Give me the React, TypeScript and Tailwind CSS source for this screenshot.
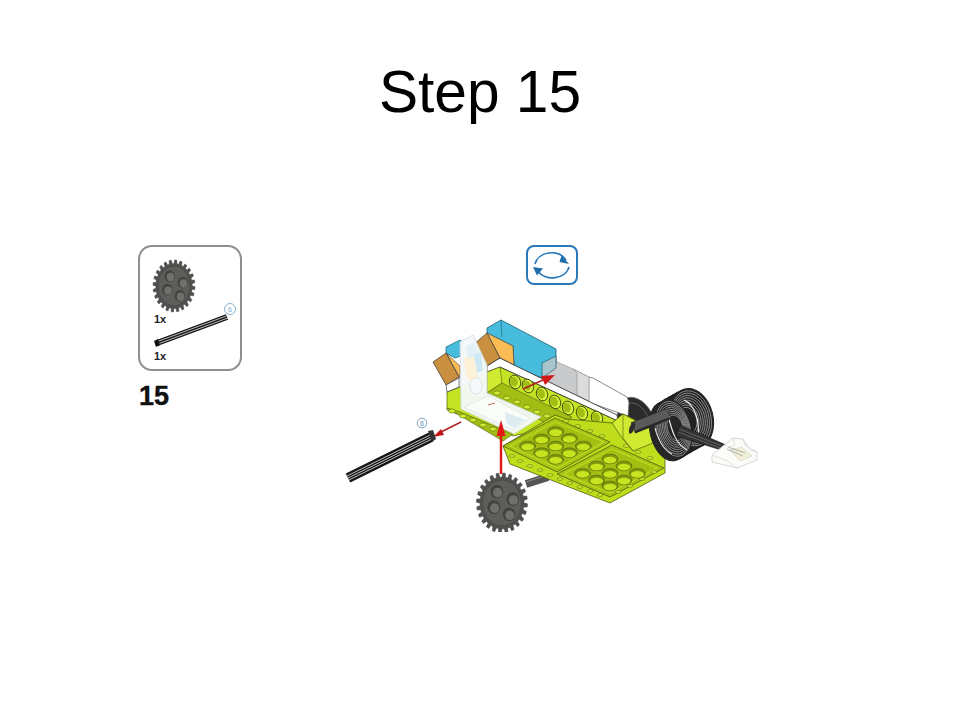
const FONT = "font-['Liberation_Sans',Arial,sans-serif]";

function gearPath(cx: number, cy: number, rx: number, ry: number, teeth: number) {
  const pts: string[] = [];
  const step = (Math.PI * 2) / teeth;
  for (let i = 0; i < teeth; i++) {
    const a = i * step + 0.08;
    const seq: [number, number][] = [
      [-0.5, 0.86],
      [-0.3, 0.87],
      [-0.2, 1],
      [0.2, 1],
      [0.3, 0.87],
    ];
    for (const [o, r] of seq) {
      const t = a + o * step;
      pts.push(`${(cx + Math.cos(t) * rx * r).toFixed(1)},${(cy + Math.sin(t) * ry * r).toFixed(1)}`);
    }
  }
  return `M${pts.join("L")}Z`;
}

function Gear({ cx, cy, rx, ry, teeth = 24 }: { cx: number; cy: number; rx: number; ry: number; teeth?: number }) {
  const holes: [number, number][] = [
    [-0.2, -0.38],
    [0.42, -0.13],
    [0.28, 0.38],
    [-0.32, 0.14],
  ];
  return (
    <g>
      <path d={gearPath(cx, cy, rx, ry, teeth)} fill="#50514e" stroke="#3f403d" strokeWidth="0.5" />
      <ellipse cx={cx} cy={cy} rx={rx * 0.76} ry={ry * 0.76} fill="#5d5e5b" stroke="#474845" strokeWidth="0.7" />
      {holes.map(([x, y], i) => (
        <g key={i}>
          <ellipse cx={cx + x * rx} cy={cy + y * ry} rx={rx * 0.25} ry={ry * 0.23} fill="#42433f" />
          <ellipse cx={cx + x * rx + 0.7} cy={cy + y * ry + 0.9} rx={rx * 0.18} ry={ry * 0.16} fill="#6f706c" />
        </g>
      ))}
    </g>
  );
}

function Axle({ x1, y1, x2, y2, w = 8, lines = [0] }: { x1: number; y1: number; x2: number; y2: number; w?: number; lines?: number[] }) {
  const dx = x2 - x1;
  const dy = y2 - y1;
  const len = Math.hypot(dx, dy);
  const nx = -dy / len;
  const ny = dx / len;
  return (
    <g>
      <line x1={x1} y1={y1} x2={x2} y2={y2} stroke="#161616" strokeWidth={w} />
      {lines.map((o, i) => (
        <line
          key={i}
          x1={x1 + nx * o}
          y1={y1 + ny * o}
          x2={x2 + nx * o}
          y2={y2 + ny * o}
          stroke="#d4d4d4"
          strokeWidth="0.9"
        />
      ))}
    </g>
  );
}

const plate1: [number, number][] = [
  [197, 275], [155, 297], [238, 295], [113, 318], [197, 318], [280, 318], [155, 338], [238, 338], [197, 358],
];
const plate2: [number, number][] = [
  [360, 357], [320, 378], [402, 378], [278, 400], [360, 400], [442, 400], [320, 420], [402, 420], [360, 438],
];
const beamHoles: [number, number][] = [
  [515, 382], [528, 386], [542, 394], [555, 402], [568, 408], [582, 413], [597, 418],
];
const studs: [number, number][] = [
  [497, 393], [507, 398], [517, 402], [527, 407], [537, 412], [547, 416],
];
const frontStuds: [number, number][] = [
  [452, 411], [463, 416], [473, 420], [483, 425], [493, 429], [503, 434],
];
const edgeStuds: [number, number][] = [
  [512, 456], [520, 461], [530, 466], [540, 470], [550, 475], [560, 479], [570, 483], [580, 487], [590, 491], [600, 495],
  [618, 492], [630, 486], [642, 479], [654, 472],
  [566, 421], [578, 426], [590, 431], [602, 436],
  [626, 446], [638, 452], [650, 458],
];
const rings = [0.93, 0.86, 0.79, 0.72, 0.65, 0.58, 0.51, 0.44];

function Diagram() {
  return (
    <svg viewBox="340 240 440 300" className="w-[440px] h-[300px] shrink-0">
      {/* rotate icon */}
      <rect x="527" y="246" width="50" height="38" rx="7" fill="#fff" stroke="#2a78b8" strokeWidth="2" />
      <path d="M535 264 C538 252 558 248 566 260" fill="none" stroke="#2a78b8" strokeWidth="1.6" />
      <path d="M561.500 255.500 L569 264 L559.500 262 Z" fill="#1f6ca8" />
      <path d="M569 267 C566 279 545 282 538 271" fill="none" stroke="#2a78b8" strokeWidth="1.6" />
      <path d="M533 267 L543 268.500 L537 275.500 Z" fill="#1f6ca8" />

      {/* coil behind plate */}
      <ellipse cx="637" cy="424" rx="18" ry="28" fill="#2b2b2b" stroke="#777" strokeWidth="0.6" transform="rotate(-22 637 424)" />
      <ellipse cx="637" cy="424" rx="13" ry="22" fill="none" stroke="#777" strokeWidth="0.6" transform="rotate(-22 637 424)" />

      {/* motor */}
      <path d="M588 377 L593 378 L627 397 L629 402 L628 416 L588 402 Z" fill="#fff" stroke="#6f6f6f" strokeWidth="0.8" />
      <path d="M543 365 L555 361 L573 369 L589 377 L589 402 L543 380 Z" fill="#c9cacb" stroke="#8d8d8d" strokeWidth="0.6" />
      <path d="M573 369 L577 373 L577 395 L589 402 L589 377 Z" fill="#dadbdc" stroke="#8d8d8d" strokeWidth="0.6" />

      {/* top blue brick */}
      <path d="M487 328 L501 320 L556 349 L556 363 L542 378 L514 367 L513 346 L487 333 Z" fill="#47bcdc" stroke="#17606f" strokeWidth="0.8" />
      <path d="M501 320 L502 337 M513 346 L514 367" stroke="#17606f" strokeWidth="0.6" />
      <path d="M542 363 L556 356 L556 368 L542 378 Z" fill="#a8c4cc" stroke="#17606f" strokeWidth="0.7" />
      <path d="M446 347 L460 340 L463 342 L461 356 L455 358 L446 353 Z" fill="#47bcdc" stroke="#17606f" strokeWidth="0.7" />

      {/* orange parts */}
      <path d="M487 333 L513 346 L514 365 L500 358 Z" fill="#fbbb55" stroke="#444" strokeWidth="0.6" />
      <path d="M473 345 L487 333 L500 358 L487 366 Z" fill="#c9913f" stroke="#333" strokeWidth="0.7" />
      <path d="M446 353 L460 366 L460 378 Z" fill="#fbbb55" stroke="#444" strokeWidth="0.6" />
      <path d="M433 362 L446 353 L459 377 L446 385 Z" fill="#c9913f" stroke="#333" strokeWidth="0.7" />

      {/* lime left and beam */}
      <path d="M447 392 L460 387 L487 372 L500 367 L618 421 L600 440 L540 430 L513 436 L447 410 Z" fill="#c4e423" stroke="#4f5e10" strokeWidth="0.7" />
      <path d="M446 385 L459 378 L459 387 L447 392 Z" fill="#fff" stroke="#222" strokeWidth="0.6" />
      <path d="M487 366 L500 358 L514 365 L617 415 L618 421 L500 367 L487 372 Z" fill="#fff" stroke="#222" strokeWidth="0.8" />
      <path d="M487 372 L500 367 L502 383 L487 393 Z" fill="#cfea30" stroke="#4f5e10" strokeWidth="0.6" />
      <path d="M487 393 L502 383 L572 417 L556 428 Z" fill="#a2bd14" stroke="#4f5e10" strokeWidth="0.6" />
      <path d="M447 408 L460 412 L513 434 L503 441 Z" fill="#a2bd14" stroke="#4f5e10" strokeWidth="0.6" />
      {beamHoles.map(([x, y], i) => (
        <g key={i}>
          <ellipse cx={x} cy={y} rx="5.500" ry="7" fill="#d6f03c" stroke="#3f4a0c" strokeWidth="0.9" transform={`rotate(-20 ${x} ${y})`} />
          <ellipse cx={x - 0.8} cy={y - 0.8} rx="3.800" ry="5" fill="#a2bd14" transform={`rotate(-20 ${x} ${y})`} />
        </g>
      ))}
      {studs.concat(frontStuds).map(([x, y], i) => (
        <ellipse key={i} cx={x} cy={y} rx="3.500" ry="2" fill="#cfea30" stroke="#4f5e10" strokeWidth="0.5" />
      ))}

      {/* transparent bracket */}
      <path d="M460 342 L473 335 L487 365 L487 393 L541 417 L514 434 L461 409 Z" fill="#f4f8f9" fillOpacity="0.96" stroke="#cdd9dc" strokeWidth="0.8" />
      <path d="M464 358 L476 354 L478 385 L466 378 Z" fill="#fdf1d8" />
      <path d="M466 346 L474 343 L478 355 L468 359 Z" fill="#e1f1f6" />
      <path d="M474 355 L481 352 L483 371 L477 373 Z" fill="#cbe8f3" />
      <path d="M464 407 L488 396 L530 418 L513 430 Z" fill="#fafcf8" stroke="#d5dfe0" strokeWidth="0.6" />
      <path d="M505 412 L526 420 L514 428 L507 424 Z" fill="#dcecf1" />
      <ellipse cx="476" cy="386" rx="6" ry="8" fill="#f7fafb" stroke="#d2dadd" strokeWidth="0.7" />
      <path d="M488 405 L495 403" stroke="#b04848" strokeWidth="0.8" />

      {/* back axle under plate */}
      <line x1="526" y1="484" x2="548" y2="477" stroke="#555653" strokeWidth="8" />
      <line x1="526" y1="482" x2="548" y2="475" stroke="#8a8b88" strokeWidth="1" />

      {/* big plate */}
      <path d="M503 446 L555 415 L566 419 L612 423 L623 414 L650 428 L653 443 L665 455 L665 473 L610 503 L510 464 Z" fill="#c0dd1c" stroke="#4f5e10" strokeWidth="0.8" />
      <path d="M612 423 L623 414 L650 428 L653 443 L633 451 L622 438 Z" fill="#cfea30" stroke="#4f5e10" strokeWidth="0.7" />
      <path d="M623 414 L623 438 L633 451" fill="none" stroke="#4f5e10" strokeWidth="0.6" />
      <path d="M503 446 L555 418 L610 442 L557 472 Z" fill="#a8c416" stroke="#4f5e10" strokeWidth="0.8" />
      <path d="M557 474 L612 445 L664 468 L610 497 Z" fill="#a8c416" stroke="#4f5e10" strokeWidth="0.8" />
      <path d="M510 446 L555 422 L604 442 L557 468 Z" fill="#a4bf12" stroke="#c4e023" strokeWidth="1" />
      <path d="M564 474 L612 449 L657 468 L610 493 Z" fill="#a4bf12" stroke="#c4e023" strokeWidth="1" />
      {edgeStuds.map(([x, y], i) => (
        <ellipse key={i} cx={x} cy={y} rx="3" ry="1.400" fill="#cfea30" stroke="#4f5e10" strokeWidth="0.5" />
      ))}
      {plate1.concat(plate2).map(([zx, zy], i) => {
        const x = 490 + zx / 3;
        const y = 340 + zy / 3;
        return (
          <g key={i}>
            <ellipse cx={x} cy={y} rx="8" ry="4.800" fill="#7f980e" stroke="#55650f" strokeWidth="0.7" />
            <ellipse cx={x} cy={y + 1.1} rx="6.400" ry="3.400" fill="#c8e31f" />
          </g>
        );
      })}

      {/* cable coil: back section */}
      {[0, 1, 2, 3, 4].map((i) => (
        <ellipse
          key={i}
          cx={692 - i * 4}
          cy={418 + i * 2.200}
          rx="21"
          ry="30"
          fill="#232323"
          stroke="#232323"
          strokeWidth="1"
          transform={`rotate(-14 ${692 - i * 4} ${418 + i * 2.2})`}
        />
      ))}
      {rings.map((k, i) => (
        <ellipse
          key={i}
          cx={692 - (1 - k) * 8}
          cy={418 + (1 - k) * 4}
          rx={21 * k}
          ry={30 * k}
          fill="none"
          stroke="#9a9a9a"
          strokeWidth="0.8"
          transform={`rotate(-14 ${692 - (1 - k) * 8} ${418 + (1 - k) * 4})`}
        />
      ))}
      <path d="M684 400 C694 404 700 420 698 436" fill="none" stroke="#f2f2f2" strokeWidth="1.1" />

      {/* cable coil: front section */}
      {[0, 1, 2, 3, 4].map((i) => (
        <ellipse
          key={i}
          cx={673 - i * 1.200}
          cy={429 + i * 0.600}
          rx="18"
          ry="30"
          fill="#262626"
          stroke="#262626"
          strokeWidth="1"
          transform={`rotate(-14 ${673 - i * 1.2} ${429 + i * 0.6})`}
        />
      ))}
      {rings.map((k, i) => (
        <ellipse
          key={i}
          cx={673 + (1 - k) * 4}
          cy={429 - (1 - k) * 2}
          rx={18 * k}
          ry={30 * k}
          fill="none"
          stroke="#979797"
          strokeWidth="0.8"
          transform={`rotate(-14 ${673 + (1 - k) * 4} ${429 - (1 - k) * 2})`}
        />
      ))}
      <path d="M668 415 C672 432 676 444 687 450" fill="none" stroke="#f2f2f2" strokeWidth="1.1" />
      <path d="M655 428 C658 440 664 450 672 454" fill="none" stroke="#f2f2f2" strokeWidth="1" />

      {/* flat cable */}
      <path d="M680 425 L733 448 L731 453 L676 436 Z" fill="#333" stroke="#151515" strokeWidth="0.6" />
      <path d="M679 429 L732 450 M678 432 L731 452" stroke="#8c8c8c" strokeWidth="0.5" />

      {/* axle out of plate */}
      <line x1="633" y1="428" x2="668" y2="414" stroke="#2a2a2a" strokeWidth="12" />
      <line x1="633" y1="427" x2="668" y2="413" stroke="#5a5b59" strokeWidth="8.500" />
      <ellipse cx="632" cy="428" rx="2.500" ry="6" fill="#2e2e2e" transform="rotate(20 632 428)" />

      {/* connector */}
      <path d="M712 455 L733 438 L743 439 L750 450 L757 452 L757 460 L737 468 L712 462 Z" fill="#fbfbf8" stroke="#d2d5d5" strokeWidth="0.9" />
      <path d="M730 450 L742 447 L752 456 L740 461 Z" fill="#f1efd6" stroke="#c9cccc" strokeWidth="0.5" />
      <path d="M728 447 L745 453 M727 449 L743 456" stroke="#8f9090" strokeWidth="0.7" />
      <path d="M733 438 L735 445 L727 448 M743 439 L745 445 L757 452 M712 455 L728 461 L737 468" fill="none" stroke="#d2d5d5" strokeWidth="0.7" />

      {/* gear and red arrows */}
      <Gear cx={502} cy={503} rx={25.500} ry={30} />
      <rect x="340" y="532" width="200" height="8" fill="#fff" />
      <path d="M501 474 L501 430" stroke="#e01818" strokeWidth="2.400" />
      <path d="M501 420 L505.500 436 L496.500 436 Z" fill="#e01818" />
      <path d="M461 422 L441 432" stroke="#b02020" strokeWidth="1.400" />
      <path d="M433 437 L441 429 L444 435 Z" fill="#c01818" />
      <path d="M523 389 L543 380" stroke="#b02020" strokeWidth="1.600" />
      <path d="M555 375 L541 376 L545 385 Z" fill="#d01818" />

      {/* loose axle */}
      <Axle x1={348} y1={478} x2={431} y2={437} w={10} lines={[-2.200, 0, 2.200]} />
      <path d="M428 431 L433 430 L436 439 L432 442 Z" fill="#333" />
      <circle cx="422" cy="423" r="4.800" fill="#fff" stroke="#5f8eb0" strokeWidth="0.8" />
      <text x="422" y="425.500" textAnchor="middle" fontSize="7" fill="#5f8eb0" fontFamily="Liberation Sans">6</text>
    </svg>
  );
}

function PartsPanel() {
  return (
    <div className="relative w-[104px] h-[126px] rounded-[14px] border-2 border-[#8f8f8f] bg-white">
      <svg viewBox="138 245 104 126" className="absolute -left-[2px] -top-[2px] w-[104px] h-[126px]">
        <Gear cx={174} cy={286} rx={21} ry={26} />
        <Axle x1={157} y1={343} x2={227} y2={317} w={6} lines={[-1.200, 1.200]} />
        <path d="M154 341 L158 339 L160 345 L156 347 Z" fill="#111" />
        <circle cx="230" cy="309" r="5.500" fill="#fff" stroke="#7ba8c8" strokeWidth="0.9" />
        <text x="230" y="311.500" textAnchor="middle" fontSize="7" fill="#7ba8c8" fontFamily="Liberation Sans">6</text>
      </svg>
      <div className="absolute left-[14px] top-[65px] text-[11px] leading-[14px] font-bold text-[#222]">1x</div>
      <div className="absolute left-[14px] top-[102px] text-[11px] leading-[14px] font-bold text-[#222]">1x</div>
    </div>
  );
}

export default function App() {
  return (
    <div className={`${FONT} relative w-[960px] h-[720px] bg-white overflow-hidden`}>
      <h1 className="pt-[59px] h-[240px] text-center text-[58.67px] leading-[66px] text-black font-normal">Step 15</h1>
      <div className="flex items-start pl-[138px]">
        <div className="w-[104px] pt-[5px]">
          <PartsPanel />
          <div className="mt-[10px] pl-[1px] text-[27px] leading-[30px] font-bold text-[#111] [-webkit-text-stroke:0.4px_#111]">15</div>
        </div>
        <div className="ml-[98px]">
          <Diagram />
        </div>
      </div>
    </div>
  );
}
